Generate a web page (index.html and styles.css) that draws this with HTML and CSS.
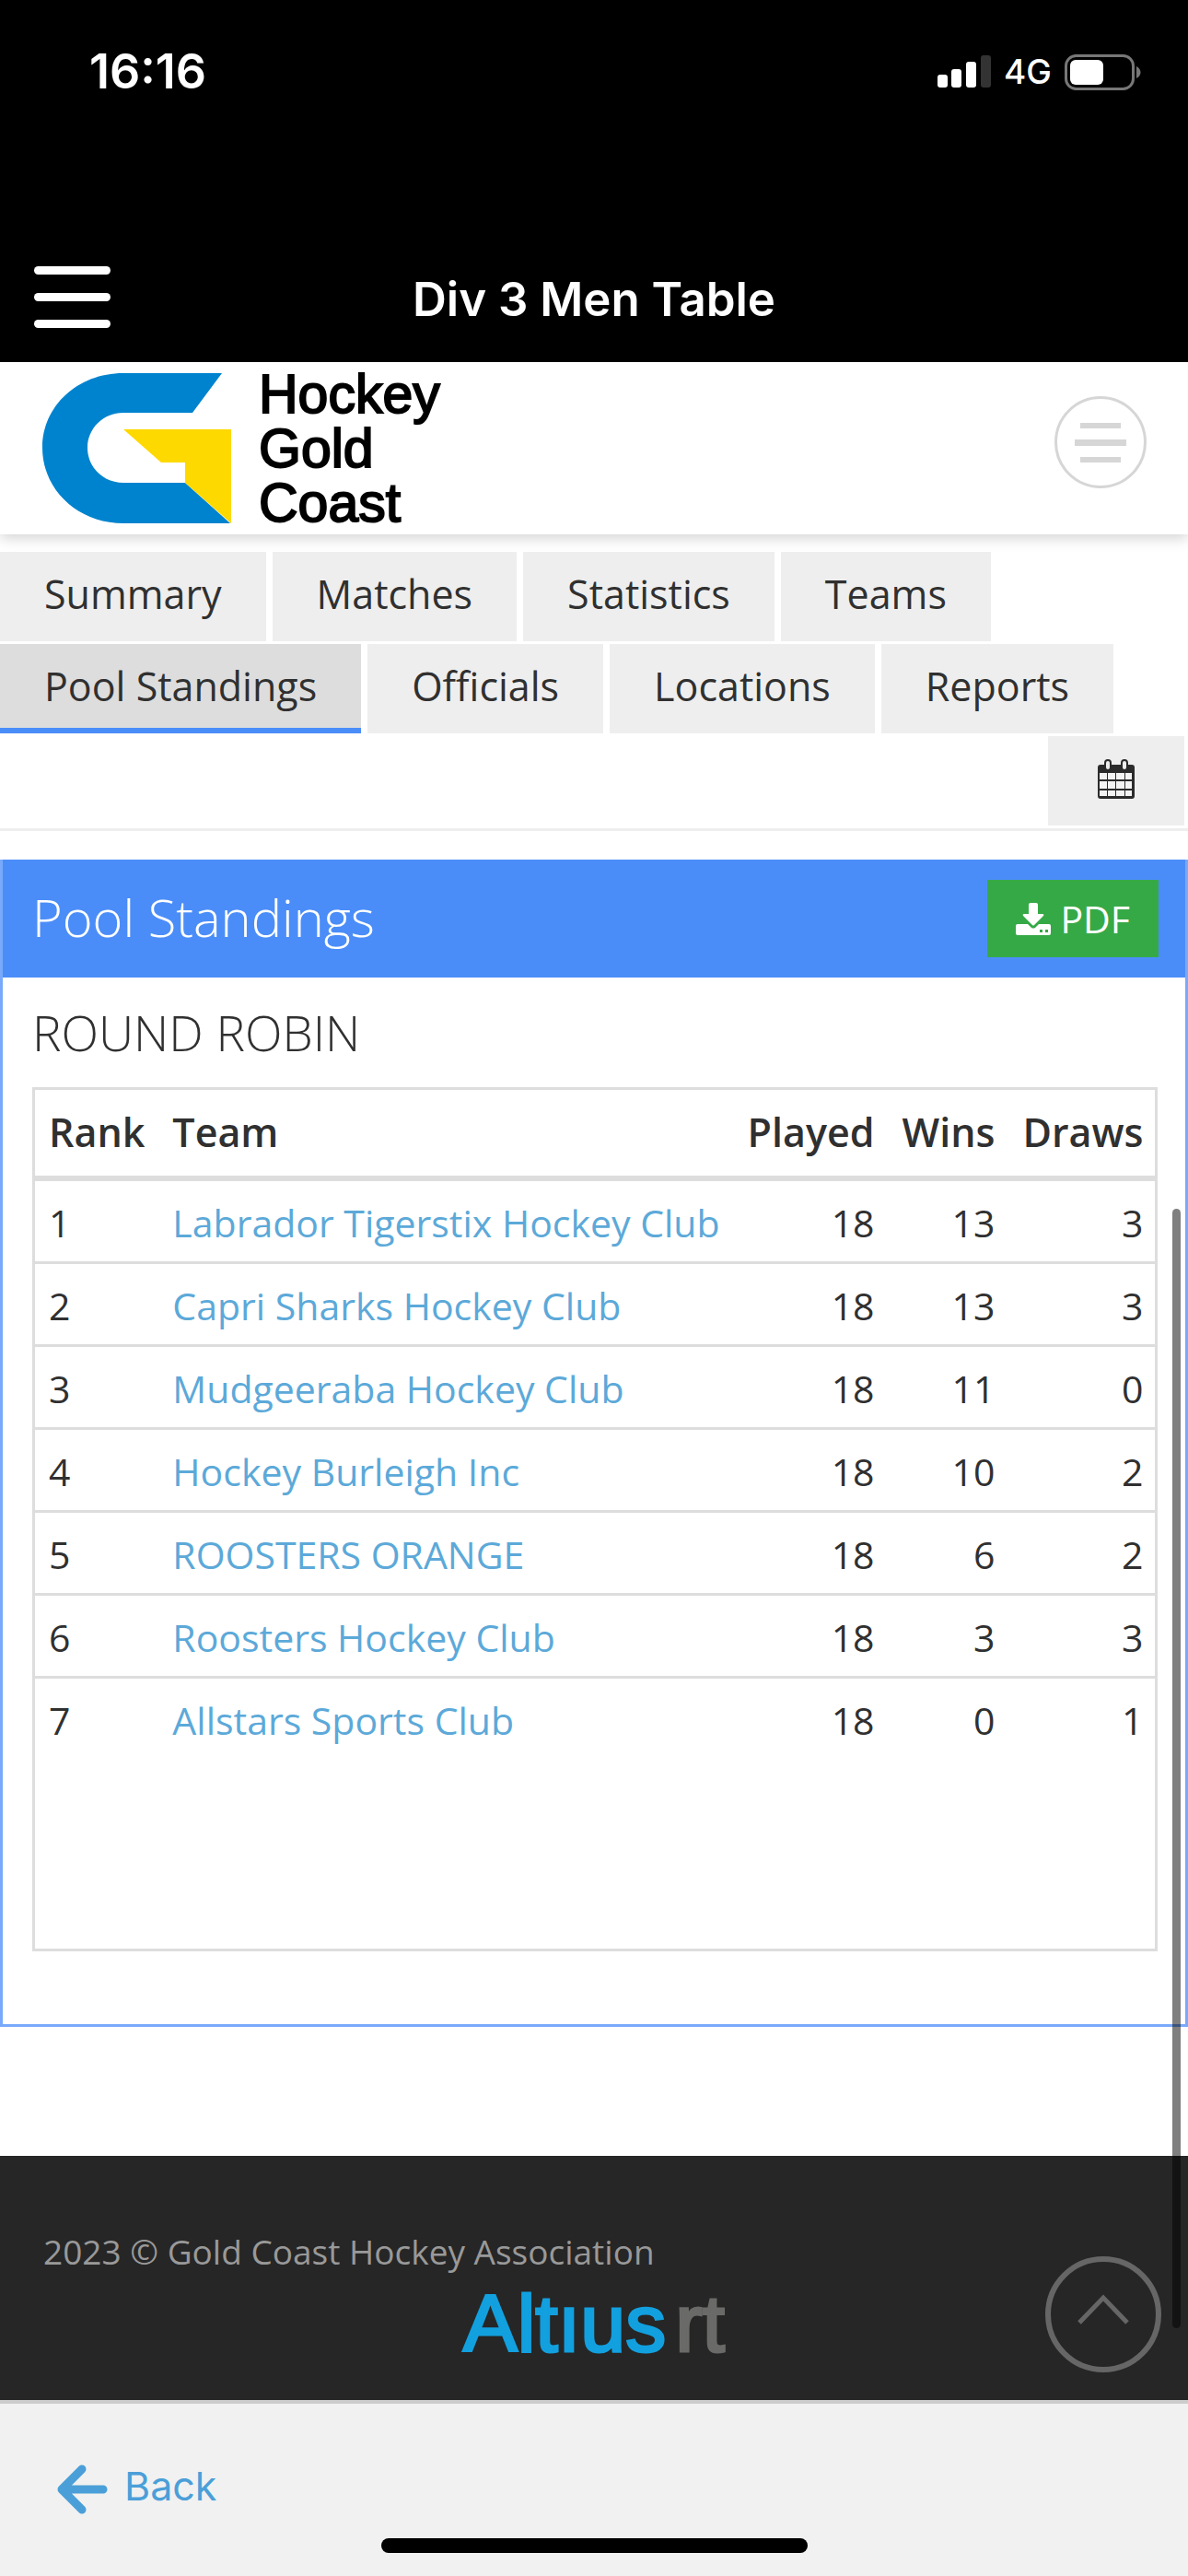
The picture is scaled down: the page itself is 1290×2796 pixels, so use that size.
FILE: index.html
```html
<!DOCTYPE html>
<html lang="en">
<head>
    <meta charset="UTF-8">
    <meta name="viewport" content="width=device-width, initial-scale=1.0">
    <title>Div 3 Men Table</title>
    <link rel="stylesheet" href="styles.css">
</head>
<body>
    <div class="status-bar">
        <span class="time">16:16</span>
        <div class="status-icons">
            <svg width="58" height="36" viewBox="0 0 58 36" fill="#fff" aria-hidden="true">
                <rect x="0" y="21" width="11" height="14" rx="3"/>
                <rect x="15" y="15" width="11" height="20" rx="3"/>
                <rect x="31" y="7" width="11" height="28" rx="3"/>
                <rect x="47" y="0" width="11" height="35" rx="3" fill="#333"/>
            </svg>
            <span class="network">4G</span>
            <svg width="84" height="40" viewBox="0 0 84 40" aria-hidden="true">
                <rect x="1.5" y="2.5" width="73" height="36" rx="11" fill="none" stroke="#777" stroke-width="3"/>
                <rect x="6" y="7" width="36" height="27" rx="6" fill="#fff"/>
                <path d="M78 14c6 3 6 10 0 13z" fill="#777"/>
            </svg>
        </div>
    </div>

    <div class="app-bar">
        <button class="app-menu" aria-label="Open menu"><span></span><span></span><span></span></button>
        <h1>Div 3 Men Table</h1>
    </div>

    <main class="page">
        <header class="site-header">
            <a class="brand" href="#">
                <svg width="205" height="163" viewBox="0 0 205 163" aria-hidden="true">
                    <path d="M195 0H88C38 0 0 36 0 81s38 82 88 82h116l-49-44H88c-22 0-39-17-39-38s17-38 39-38h75z" fill="#0083ce"/>
                    <path d="M88 61h117v102l-50-44V97h-26z" fill="#fdd900"/>
                </svg>
                <span>Hockey<br>Gold<br>Coast</span>
            </a>
            <button class="nav-toggle" aria-label="Toggle navigation">
                <svg width="56" height="43" viewBox="0 0 56 43" fill="#d6d6d6">
                    <rect x="6" y="0" width="44" height="6"/>
                    <rect x="0" y="18" width="56" height="7"/>
                    <rect x="6" y="37" width="44" height="6"/>
                </svg>
            </button>
        </header>

        <nav class="tabs">
            <a href="#">Summary</a>
            <a href="#">Matches</a>
            <a href="#">Statistics</a>
            <a href="#">Teams</a>
            <a href="#" class="active">Pool Standings</a>
            <a href="#">Officials</a>
            <a href="#">Locations</a>
            <a href="#">Reports</a>
            <a href="#" class="calendar" aria-label="Calendar">
                <svg width="42" height="45" viewBox="0 0 42 45">
                    <rect x="1" y="7" width="40" height="37" rx="3" fill="#2b2b2b"/>
                    <path d="M3 16h8v7H3zM12 16h8v7h-8zM21 16h9v7h-9zM31 16h7v7h-7zM3 25h8v8H3zM12 25h8v8h-8zM21 25h9v8h-9zM31 25h7v8h-7zM3 35h8v6H3zM12 35h8v6h-8zM21 35h9v6h-9zM31 35h7v6h-7z" fill="#f4f4f4"/>
                    <rect x="9" y="2" width="6" height="11" rx="3" fill="#eee" stroke="#2b2b2b" stroke-width="2"/>
                    <rect x="27" y="2" width="6" height="11" rx="3" fill="#eee" stroke="#2b2b2b" stroke-width="2"/>
                </svg>
            </a>
        </nav>

        <section class="panel">
            <div class="panel-heading">
                <h2>Pool Standings</h2>
                <button class="btn-pdf">
                    <svg width="38" height="35" viewBox="0 0 38 35" fill="#fff" aria-hidden="true">
                        <path d="M16 0h6q2 0 2 2v10h5q2 0 1 2L20 24q-1 1-2 0L8 14q-1-2 1-2h5V2q0-2 2-2z"/>
                        <path fill-rule="evenodd" d="M2 23h11l4 4q2 1 4 0l4-4h11q2 0 2 2v8q0 2-2 2H2q-2 0-2-2v-8q0-2 2-2zM26 29v3h3v-3zM32 29v3h3v-3z"/>
                    </svg>
                    PDF
                </button>
            </div>
            <div class="panel-body">
                <h3>ROUND ROBIN</h3>
                <div class="table-wrap">
                    <table>
                        <thead>
                            <tr><th>Rank</th><th>Team</th><th class="num">Played</th><th class="num">Wins</th><th class="num">Draws</th></tr>
                        </thead>
                        <tbody>
                            <tr><td>1</td><td><a href="#">Labrador Tigerstix Hockey Club</a></td><td class="num">18</td><td class="num">13</td><td class="num">3</td></tr>
                            <tr><td>2</td><td><a href="#">Capri Sharks Hockey Club</a></td><td class="num">18</td><td class="num">13</td><td class="num">3</td></tr>
                            <tr><td>3</td><td><a href="#">Mudgeeraba Hockey Club</a></td><td class="num">18</td><td class="num">11</td><td class="num">0</td></tr>
                            <tr><td>4</td><td><a href="#">Hockey Burleigh Inc</a></td><td class="num">18</td><td class="num">10</td><td class="num">2</td></tr>
                            <tr><td>5</td><td><a href="#">ROOSTERS ORANGE</a></td><td class="num">18</td><td class="num">6</td><td class="num">2</td></tr>
                            <tr><td>6</td><td><a href="#">Roosters Hockey Club</a></td><td class="num">18</td><td class="num">3</td><td class="num">3</td></tr>
                            <tr><td>7</td><td><a href="#">Allstars Sports Club</a></td><td class="num">18</td><td class="num">0</td><td class="num">1</td></tr>
                        </tbody>
                    </table>
                </div>
            </div>
        </section>

        <footer class="site-footer">
            <p>2023 &copy; Gold Coast Hockey Association</p>
            <a class="altius" href="#">Altıus<span>rt</span></a>
            <button class="to-top" aria-label="Back to top">
                <svg width="56" height="34" viewBox="0 0 56 34" fill="none" stroke="#666" stroke-width="5">
                    <path d="M2 31L28 4l26 27"/>
                </svg>
            </button>
        </footer>
        <div class="scrollbar"></div>
    </main>

    <div class="bottom-bar">
        <a class="back" href="#">
            <svg width="56" height="54" viewBox="0 0 56 54" fill="none" stroke="#4b9fd8" stroke-width="9" stroke-linecap="round" stroke-linejoin="round" aria-hidden="true">
                <path d="M28 5L6 27l22 22M8 27h43"/>
            </svg>
            Back
        </a>
        <div class="home-indicator"></div>
    </div>
</body>
</html>
```

FILE: styles.css
```css
* {
    box-sizing: border-box;
}

body {
    margin: 0;
    min-height: 100vh;
    display: flex;
    flex-direction: column;
    background: #fff;
    color: #303030;
    font-family: "Open Sans", sans-serif;
    font-size: 41px;
    line-height: 60px;
}

a {
    color: #5ca9d9;
    text-decoration: none;
}

button {
    border: none;
    background: none;
    padding: 0;
    font-family: inherit;
    cursor: pointer;
}

svg {
    display: block;
}

/* phone status bar */
.status-bar {
    display: flex;
    justify-content: space-between;
    align-items: center;
    height: 156px;
    padding: 0 50px 0 97px;
    background: #000;
    color: #fff;
    font-family: Inter, sans-serif;
}

.time {
    font-size: 52px;
    font-weight: 600;
}

.status-icons {
    display: flex;
    align-items: center;
    gap: 14px;
}

.network {
    font-size: 37px;
    font-weight: 500;
}

/* app title bar */
.app-bar {
    display: grid;
    grid-template-columns: 1fr auto 1fr;
    align-items: center;
    height: 237px;
    padding: 96px 37px 0;
    background: #000;
    color: #fff;
}

.app-menu {
    display: flex;
    flex-direction: column;
    gap: 20px;
    width: 83px;
}

.app-menu span {
    height: 9px;
    border-radius: 5px;
    background: #fff;
}

.app-bar h1 {
    margin: 0;
    padding-top: 4px;
    font-family: Inter, sans-serif;
    font-size: 51px;
    font-weight: 600;
}

.page {
    position: relative;
    flex: 1;
    display: flex;
    flex-direction: column;
}

.site-header {
    display: flex;
    justify-content: space-between;
    height: 187px;
    padding: 0 45px 0 46px;
    box-shadow: 0 3px 15px rgba(0, 0, 0, 0.2);
}

.brand {
    display: flex;
    align-items: center;
    gap: 30px;
    color: #000;
    font-family: "Liberation Sans", Arial, sans-serif;
    font-size: 59px;
    line-height: 59px;
    -webkit-text-stroke: 2px #000;
}

.brand span {
    padding-top: 2px;
}

.nav-toggle {
    display: flex;
    align-items: center;
    justify-content: center;
    width: 100px;
    height: 100px;
    margin-top: 37px;
    border: 3px solid #d6d6d6;
    border-radius: 50%;
}

/* competition tabs */
.tabs {
    display: flex;
    flex-wrap: wrap;
    gap: 3px 7px;
    margin-top: 19px;
    padding: 0 4px 3px 0;
    border-bottom: 3px solid #eee;
}

.tabs a {
    height: 97px;
    padding: 16px 48px;
    background: #eee;
    color: #303030;
    font-size: 43px;
}

.tabs .active {
    background: #ddd;
    border-bottom: 6px solid #4b8df8;
}

.tabs .calendar {
    margin-left: auto;
    padding: 24px 53px;
}

/* standings */
.panel {
    margin-top: 31px;
    border: 3px solid #78a9fb;
    border-top: none;
}

.panel-heading {
    display: flex;
    justify-content: space-between;
    align-items: center;
    height: 128px;
    padding: 0 29px 0 32px;
    background: #4b8df8;
}

.panel-heading h2 {
    margin: 0;
    padding-bottom: 4px;
    color: #fff;
    font-size: 56px;
    font-weight: 300;
}

.btn-pdf {
    display: flex;
    align-items: center;
    gap: 10px;
    height: 84px;
    padding: 0 31px;
    background: #36a947;
    color: #fff;
    font-size: 41px;
}

.panel-body {
    padding: 30px 30px 79px 32px;
}

h3 {
    margin: 0 0 29px;
    font-size: 53px;
    font-weight: 300;
}

.table-wrap {
    padding-bottom: 206px;
    border: 3px solid #ddd;
    overflow: hidden;
}

table {
    border-collapse: collapse;
    white-space: nowrap;
}

th,
td {
    padding: 15px 15px 12px;
    text-align: left;
}

th {
    padding: 16px 15px 17px;
    border-bottom: 6px solid #ddd;
    font-size: 43px;
    font-weight: 600;
}

td {
    border-bottom: 3px solid #ddd;
}

tbody tr:last-child td {
    border-bottom: none;
}

th.num,
td.num {
    text-align: right;
}

.site-footer {
    position: relative;
    height: 265px;
    margin-top: auto;
    padding: 74px 47px 0;
    background: #262626;
}

.site-footer p {
    margin: 0 0 4px;
    color: #999;
    font-size: 37px;
}

.altius {
    display: flex;
    justify-content: center;
    gap: 10px;
    color: #12a0df;
    font-family: "Liberation Sans", Arial, sans-serif;
    font-size: 88px;
    line-height: 88px;
    -webkit-text-stroke: 3px;
}

.altius span {
    color: #6a6a68;
}

.to-top {
    position: absolute;
    right: 29px;
    bottom: 30px;
    display: flex;
    align-items: center;
    justify-content: center;
    width: 126px;
    height: 126px;
    padding-bottom: 10px;
    border: 6px solid #666;
    border-radius: 50%;
}

/* sits over the page and the footer */
.scrollbar {
    position: absolute;
    right: 8px;
    bottom: 78px;
    width: 9px;
    height: 1215px;
    border-radius: 5px;
    background: rgba(0, 0, 0, 0.5);
}

.bottom-bar {
    display: flex;
    flex-direction: column;
    justify-content: space-between;
    height: 191px;
    padding: 66px 61px 25px;
    border-top: 4px solid #ccc;
    background: #f1f1f1;
}

.back {
    display: flex;
    align-items: flex-start;
    gap: 18px;
    color: #4b9fd8;
    font-family: Inter, sans-serif;
    font-size: 43px;
    line-height: 46px;
}

.home-indicator {
    align-self: center;
    width: 463px;
    height: 16px;
    border-radius: 8px;
    background: #000;
}
```
